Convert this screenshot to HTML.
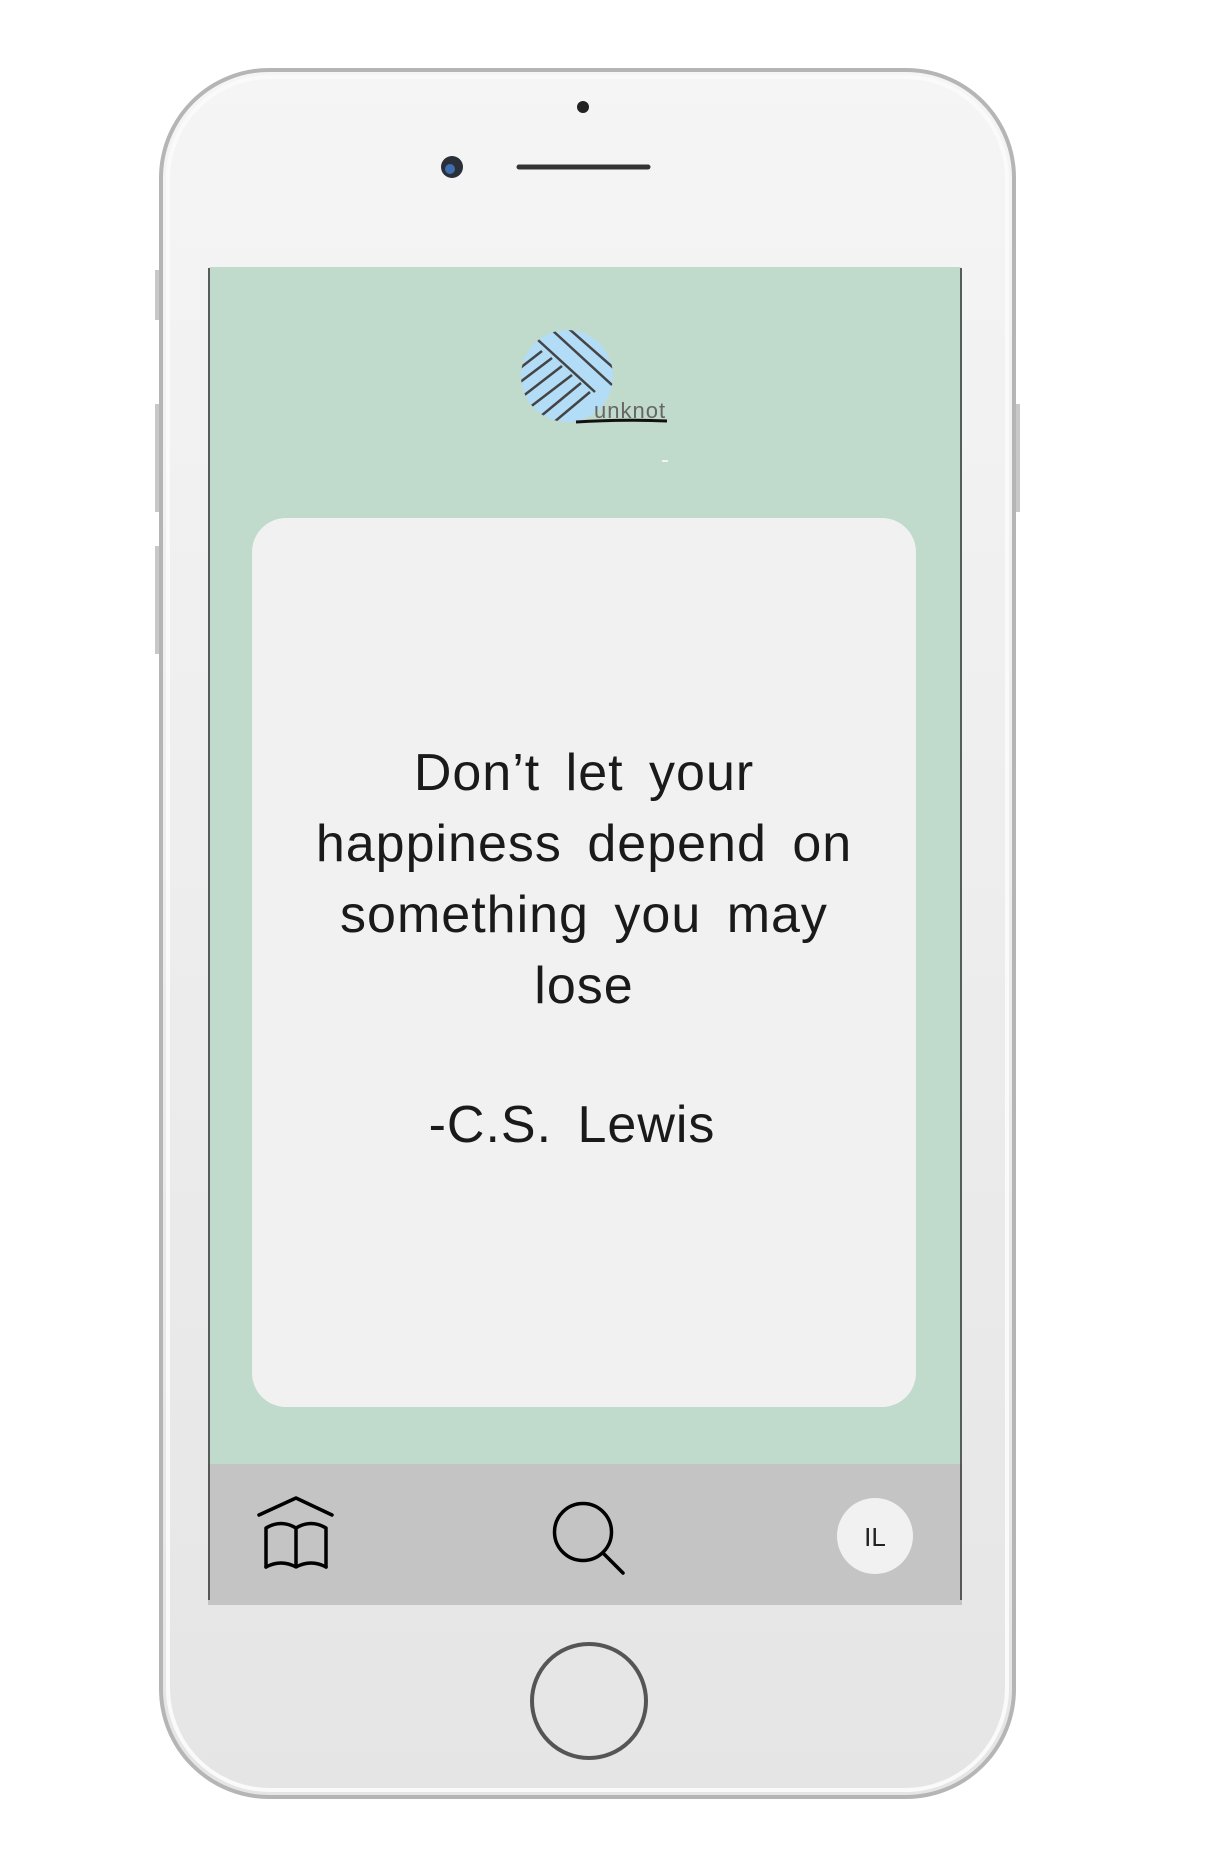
<!DOCTYPE html>
<html><head><meta charset="utf-8"><style>
html,body{margin:0;padding:0;background:#fff;width:1208px;height:1862px;overflow:hidden;position:relative;font-family:"Liberation Sans",sans-serif}
.abs{position:absolute}
.quote{position:absolute;left:252px;width:664px;text-align:center;color:#1a1a1a;font-size:52px;font-weight:300;letter-spacing:1px;word-spacing:10px}
</style></head><body>
<svg class="abs" style="left:0;top:0" width="1208" height="1862">
<defs><linearGradient id="bg" x1="0" y1="0" x2="0" y2="1"><stop offset="0" stop-color="#f5f5f5"/><stop offset="1" stop-color="#e5e5e5"/></linearGradient></defs>
<rect x="155" y="270" width="8" height="50" fill="#c8c8c8"/>
<rect x="155" y="404" width="8" height="108" fill="#c8c8c8"/>
<rect x="155" y="546" width="8" height="108" fill="#c8c8c8"/>
<rect x="1012" y="404" width="8" height="108" fill="#c8c8c8"/>
<rect x="161" y="70" width="853" height="1727" rx="108" fill="url(#bg)" stroke="#b5b5b5" stroke-width="4"/>
<rect x="168" y="77" width="839" height="1713" rx="102" fill="none" stroke="#fafafa" stroke-width="4"/>
<circle cx="583" cy="107" r="6" fill="#222"/>
<circle cx="452" cy="167" r="11" fill="#2a2f38"/>
<circle cx="450" cy="169" r="5" fill="#3d6fae"/>
<line x1="519" y1="167" x2="648" y2="167" stroke="#333" stroke-width="5" stroke-linecap="round"/>
<circle cx="589" cy="1701" r="57" fill="none" stroke="#555" stroke-width="4"/>
<rect x="208" y="267" width="754" height="1338" rx="3" fill="#c0dacc"/>
<rect x="208" y="1464" width="754" height="141" fill="#c4c4c4"/>
<line x1="209" y1="268" x2="209" y2="1600" stroke="#333" stroke-width="1.5"/>
<line x1="961" y1="268" x2="961" y2="1600" stroke="#333" stroke-width="1.5"/>
<rect x="252" y="518" width="664" height="889" rx="34" fill="#f1f1f1"/>
<clipPath id="cc"><circle cx="567" cy="376" r="46"/></clipPath>
<circle cx="567" cy="376" r="46" fill="#b3dcf7"/>
<g clip-path="url(#cc)" stroke="#444" stroke-width="2.5">
<line x1="538" y1="340" x2="595" y2="392"/><line x1="552" y1="330" x2="612" y2="385"/><line x1="568" y1="328" x2="625" y2="378"/><line x1="585" y1="326" x2="632" y2="366"/>
<line x1="515" y1="372" x2="542" y2="351"/><line x1="515" y1="386" x2="552" y2="358"/><line x1="518" y1="400" x2="562" y2="366"/><line x1="525" y1="411" x2="572" y2="375"/><line x1="535" y1="421" x2="581" y2="383"/><line x1="547" y1="428" x2="590" y2="392"/>
</g>
<text x="594" y="418" font-size="22" fill="#666" font-family="Liberation Sans" font-weight="300" letter-spacing="1">unknot</text>
<path d="M576 422 Q620 419 667 421" stroke="#111" stroke-width="3" fill="none"/>
<line x1="662" y1="461" x2="668" y2="461" stroke="#fff" stroke-width="1.5"/>
<g fill="none" stroke="#000" stroke-width="3.5" stroke-linecap="round" stroke-linejoin="round">
<path d="M259 1515 L296 1498 L332 1515"/>
<path d="M266 1567 V1528 Q281 1519 296 1528 Q311 1519 326 1528 V1567"/>
<path d="M266 1567 Q281 1559 296 1567 Q311 1559 326 1567"/>
<line x1="296" y1="1528" x2="296" y2="1566"/>
<circle cx="583" cy="1532" r="28.5"/>
<line x1="603" y1="1553" x2="623" y2="1573"/>
</g>
<circle cx="875" cy="1536" r="38" fill="#f1f1f1"/>
<text x="875" y="1546" font-size="26" text-anchor="middle" fill="#222" font-weight="300">IL</text>
</svg>
<div class="quote" style="top:738px;line-height:71px">Don’t let your<br>happiness depend on<br>something you may<br>lose</div>
<div class="quote" style="top:1090px;line-height:71px;left:240px">-C.S. Lewis</div>
</body></html>
